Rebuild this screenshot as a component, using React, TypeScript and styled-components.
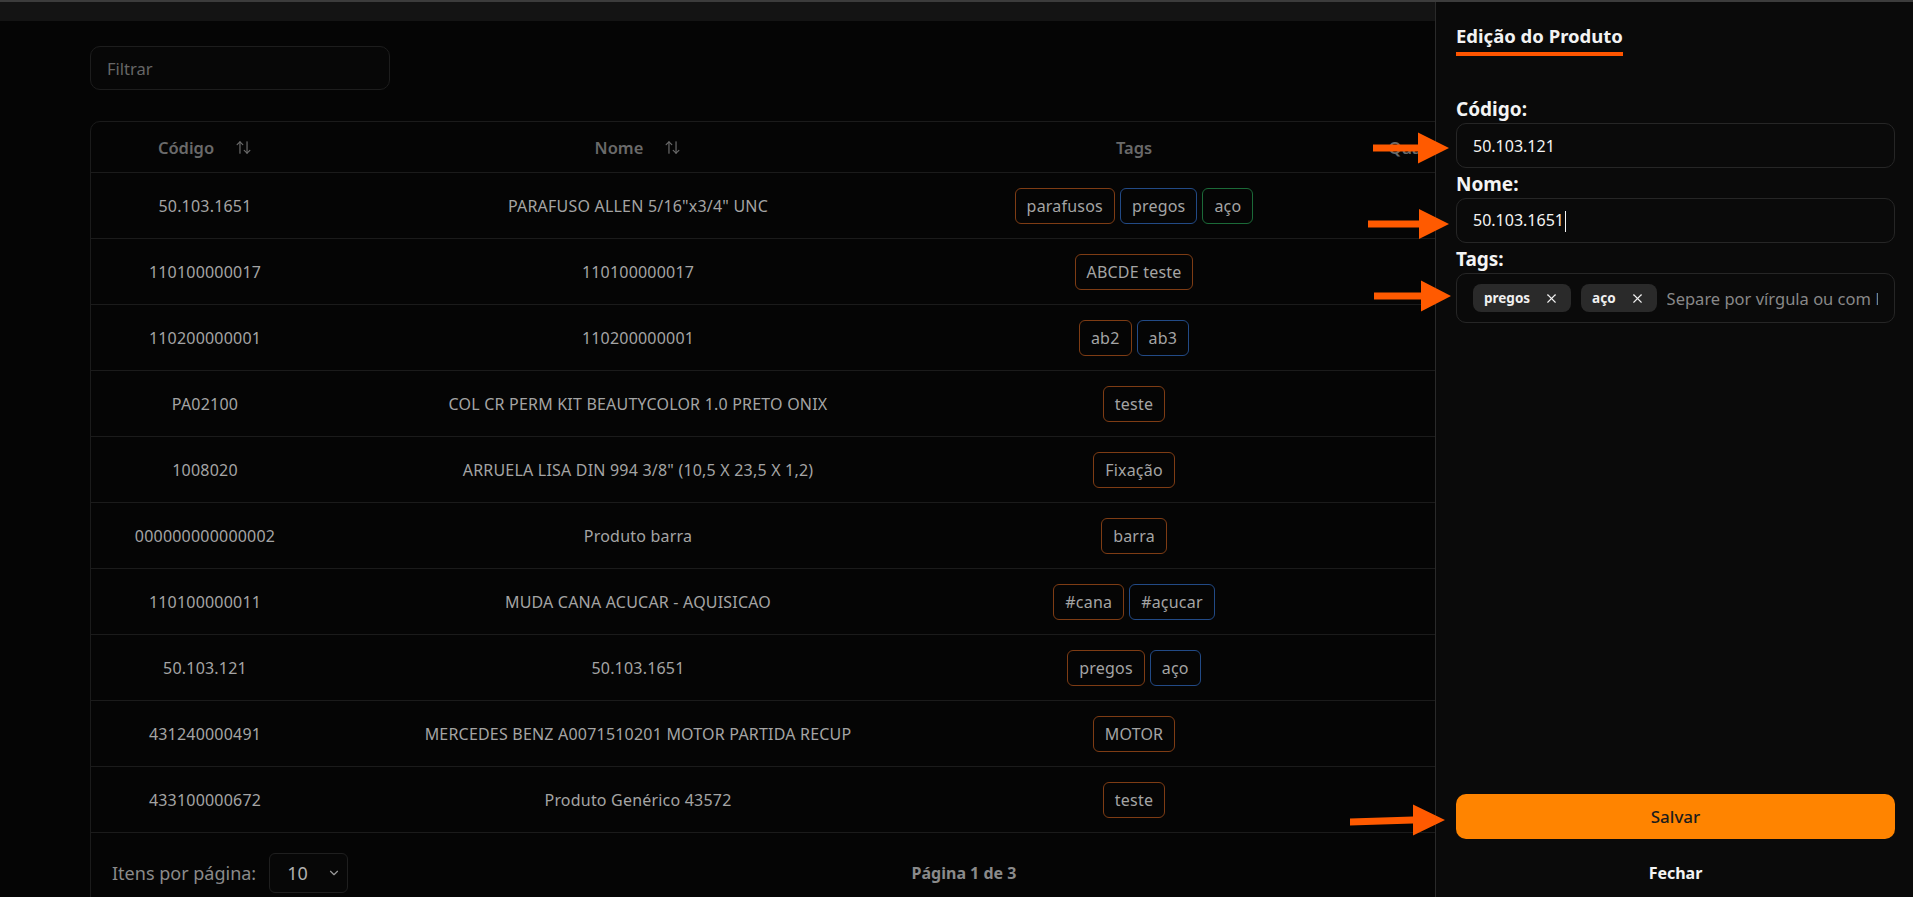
import React from "react";
import styled, { createGlobalStyle } from "styled-components";
import { ArrowUpDown, X, ChevronDown } from "lucide-react";

const Global = createGlobalStyle`
  html, body { margin: 0; padding: 0; background: #050505; overflow: hidden; }
  body { font-family: "Noto Sans", "Open Sans", Arial, sans-serif; color: #a6a6a6; }
  * { box-sizing: border-box; }
`;

const Screen = styled.div`
  width: 1913px;
  height: 897px;
  position: relative;
  overflow: hidden;
  background: #050505;
  display: flex;
  flex-direction: column;
`;

const TopLine = styled.div`
  height: 2px;
  flex: none;
  background: #3c3c3c;
`;

const Page = styled.main`
  flex: 1;
  display: flex;
  flex-direction: column;
`;

const TopBand = styled.div`
  height: 19px;
  flex: none;
  background: #141414;
`;

const Viewport = styled.div`
  width: 1435px;
  overflow: hidden;
`;

const Content = styled.section`
  width: 1913px;
  padding: 25px 75px 0 90px;
  display: flex;
  flex-direction: column;
  gap: 31px;
`;

const FilterInput = styled.input`
  width: 300px;
  height: 44px;
  border: 1px solid #1d1d1d;
  border-radius: 10px;
  background: #070707;
  padding: 0 16px;
  font-family: inherit;
  font-size: 16.5px;
  color: #aaa;
  outline: none;
  &::placeholder { color: #666; }
`;

const TableCard = styled.div`
  border: 1px solid #1b1b1b;
  border-radius: 10px;
  display: flex;
  flex-direction: column;
`;

const cols = "228px 638px 354px 250px 1fr";

const HeadRow = styled.div`
  display: grid;
  grid-template-columns: ${cols};
  height: 51px;
  border-bottom: 1px solid #1b1b1b;
`;

const HeadCell = styled.div`
  display: flex;
  align-items: center;
  justify-content: center;
  gap: 21px;
  font-size: 16.5px;
  font-weight: 600;
  color: #6a6a6a;
  overflow: hidden;
`;

const Row = styled.div`
  display: grid;
  grid-template-columns: ${cols};
  height: 66px;
  border-bottom: 1px solid #1b1b1b;
  &:last-of-type { border-bottom: none; height: 65px; }
`;

const Cell = styled.div`
  display: flex;
  align-items: center;
  justify-content: center;
  gap: 5px;
  font-size: 16px;
  letter-spacing: 0.2px;
  color: #a4a4a4;
  white-space: nowrap;
`;

const toneColors: Record<string, string> = {
  orange: "#7e3c14",
  blue: "#224a86",
  green: "#1b6a38",
};

const Badge = styled.span<{ $tone: string }>`
  display: inline-flex;
  align-items: center;
  height: 36px;
  padding: 0 11px;
  border: 1px solid ${(p) => toneColors[p.$tone]};
  border-radius: 6px;
  font-size: 16px;
  letter-spacing: 0.2px;
  color: #a4a4a4;
`;

const Pagination = styled.div`
  display: grid;
  grid-template-columns: 1fr auto 1fr;
  align-items: center;
  height: 80px;
  padding: 0 21px;
`;

const PerPage = styled.div`
  display: flex;
  align-items: center;
  gap: 13px;
  font-size: 18px;
  color: #8a8a8a;
`;

const SelectBox = styled.div`
  width: 79px;
  height: 40px;
  border: 1px solid #1f1f1f;
  border-radius: 6px;
  background: #070707;
  display: flex;
  align-items: center;
  justify-content: space-between;
  padding: 0 6px 0 17px;
  font-size: 18px;
  color: #b0b0b0;
`;

const PageInfo = styled.div`
  font-size: 16px;
  font-weight: 700;
  color: #8a8a8a;
`;

const Drawer = styled.aside`
  position: absolute;
  top: 2px;
  right: 0;
  bottom: 0;
  width: 478px;
  background: #0a0a0a;
  border-left: 1px solid #2a2a2a;
  padding: 22px 18px 1px 20px;
  display: flex;
  flex-direction: column;
`;

const Title = styled.h2`
  align-self: flex-start;
  margin: 0;
  font-size: 18.5px;
  font-weight: 700;
  color: #f2f2f2;
  line-height: 24px;
  padding-bottom: 4px;
  border-bottom: 4px solid #ff5500;
`;

const Form = styled.div`
  margin-top: 41px;
  display: flex;
  flex-direction: column;
`;

const Label = styled.label`
  font-size: 19px;
  font-weight: 700;
  color: #f4f4f4;
  line-height: 24px;
  margin-bottom: 2px;
`;

const FieldBox = styled.div<{ $tall?: boolean }>`
  height: ${(p) => (p.$tall ? "50px" : "45px")};
  border: 1px solid #262626;
  border-radius: 10px;
  display: flex;
  align-items: center;
  gap: 10px;
  padding: 0 16px;
  font-size: 16px;
  color: #f4f4f4;
  margin-bottom: 4px;
  overflow: hidden;
`;

const Caret = styled.span`
  display: inline-block;
  width: 1px;
  height: 21px;
  background: #f4f4f4;
  margin-left: 1px;
  vertical-align: middle;
`;

const Chip = styled.span`
  flex: none;
  display: inline-flex;
  align-items: center;
  gap: 14px;
  height: 28px;
  padding: 0 12px 0 11px;
  border-radius: 8px;
  background: #2a2a2a;
  font-size: 13.5px;
  font-weight: 700;
  color: #f0f0f0;
`;

const TagInput = styled.input`
  flex: 1;
  min-width: 0;
  border: none;
  outline: none;
  background: transparent;
  padding: 0;
  font-family: inherit;
  font-size: 16.5px;
  color: #ddd;
  &::placeholder { color: #888; }
`;

const Spacer = styled.div`
  flex: 1;
`;

const SaveButton = styled.button`
  height: 45px;
  border: none;
  border-radius: 10px;
  background: #ff8400;
  font-family: inherit;
  font-size: 17px;
  font-weight: 500;
  color: #1c1c1c;
`;

const CloseButton = styled.button`
  height: 46px;
  margin-top: 11px;
  border: none;
  background: transparent;
  font-family: inherit;
  font-size: 16px;
  font-weight: 700;
  color: #f4f4f4;
`;

const Overlay = styled.svg`
  position: absolute;
  inset: 0;
  pointer-events: none;
`;

type Tag = { label: string; tone: string };
const tones = ["orange", "blue", "green"];
const mk = (...l: string[]): Tag[] => l.map((label, i) => ({ label, tone: tones[i % 3] }));

const rows = [
  { code: "50.103.1651", name: 'PARAFUSO ALLEN 5/16"x3/4" UNC', tags: mk("parafusos", "pregos", "aço") },
  { code: "110100000017", name: "110100000017", tags: mk("ABCDE teste") },
  { code: "110200000001", name: "110200000001", tags: mk("ab2", "ab3") },
  { code: "PA02100", name: "COL CR PERM KIT BEAUTYCOLOR 1.0 PRETO ONIX", tags: mk("teste") },
  { code: "1008020", name: 'ARRUELA LISA DIN 994 3/8" (10,5 X 23,5 X 1,2)', tags: mk("Fixação") },
  { code: "000000000000002", name: "Produto barra", tags: mk("barra") },
  { code: "110100000011", name: "MUDA CANA ACUCAR - AQUISICAO", tags: mk("#cana", "#açucar") },
  { code: "50.103.121", name: "50.103.1651", tags: mk("pregos", "aço") },
  { code: "431240000491", name: "MERCEDES BENZ A0071510201 MOTOR PARTIDA RECUP", tags: mk("MOTOR") },
  { code: "433100000672", name: "Produto Genérico 43572", tags: mk("teste") },
];

const arrows = [
  { x0: 1373, y0: 148, y0b: 148, bx: 1418, tx: 1449, ty: 148, h: 15.5 },
  { x0: 1368, y0: 224, y0b: 224, bx: 1419, tx: 1449, ty: 224, h: 15 },
  { x0: 1374, y0: 296, y0b: 296, bx: 1421, tx: 1451, ty: 296, h: 15.5 },
  { x0: 1350, y0: 822, y0b: 820, bx: 1413, tx: 1445, ty: 820, h: 15.5 },
];

function arrowPoints(a: typeof arrows[number]) {
  const t = 3.4;
  return [
    [a.x0, a.y0 - t],
    [a.bx, a.y0b - t],
    [a.bx, a.ty - a.h],
    [a.tx, a.ty],
    [a.bx, a.ty + a.h],
    [a.bx, a.y0b + t],
    [a.x0, a.y0 + t],
  ]
    .map((p) => p.join(","))
    .join(" ");
}

export default function App() {
  return (
    <>
      <Global />
      <Screen>
        <TopLine />
        <Page>
          <TopBand />
          <Viewport>
            <Content>
              <FilterInput placeholder="Filtrar" />
              <TableCard>
                <HeadRow>
                  <HeadCell>
                    Código <ArrowUpDown size={17} strokeWidth={1.7} />
                  </HeadCell>
                  <HeadCell>
                    Nome <ArrowUpDown size={17} strokeWidth={1.7} />
                  </HeadCell>
                  <HeadCell>Tags</HeadCell>
                  <HeadCell>Quantidade</HeadCell>
                  <HeadCell />
                </HeadRow>
                {rows.map((r) => (
                  <Row key={r.code}>
                    <Cell>{r.code}</Cell>
                    <Cell>{r.name}</Cell>
                    <Cell>
                      {r.tags.map((t) => (
                        <Badge key={t.label} $tone={t.tone}>
                          {t.label}
                        </Badge>
                      ))}
                    </Cell>
                    <Cell />
                    <Cell />
                  </Row>
                ))}
                <Pagination>
                  <PerPage>
                    Itens por página:
                    <SelectBox>
                      10 <ChevronDown size={14} strokeWidth={2} color="#9a9a9a" />
                    </SelectBox>
                  </PerPage>
                  <PageInfo>Página 1 de 3</PageInfo>
                  <div />
                </Pagination>
              </TableCard>
            </Content>
          </Viewport>
        </Page>

        <Drawer>
          <Title>Edição do Produto</Title>
          <Form>
            <Label>Código:</Label>
            <FieldBox>50.103.121</FieldBox>
            <Label>Nome:</Label>
            <FieldBox>
              <span>
                50.103.1651
                <Caret />
              </span>
            </FieldBox>
            <Label>Tags:</Label>
            <FieldBox $tall>
              <Chip>
                pregos <X size={15} strokeWidth={1.8} />
              </Chip>
              <Chip>
                aço <X size={15} strokeWidth={1.8} />
              </Chip>
              <TagInput placeholder="Separe por vírgula ou com Enter" />
            </FieldBox>
          </Form>
          <Spacer />
          <SaveButton>Salvar</SaveButton>
          <CloseButton>Fechar</CloseButton>
        </Drawer>

        <Overlay width="1913" height="897" viewBox="0 0 1913 897">
          {arrows.map((a, i) => (
            <polygon key={i} points={arrowPoints(a)} fill="#ff5a00" />
          ))}
        </Overlay>
      </Screen>
    </>
  );
}
